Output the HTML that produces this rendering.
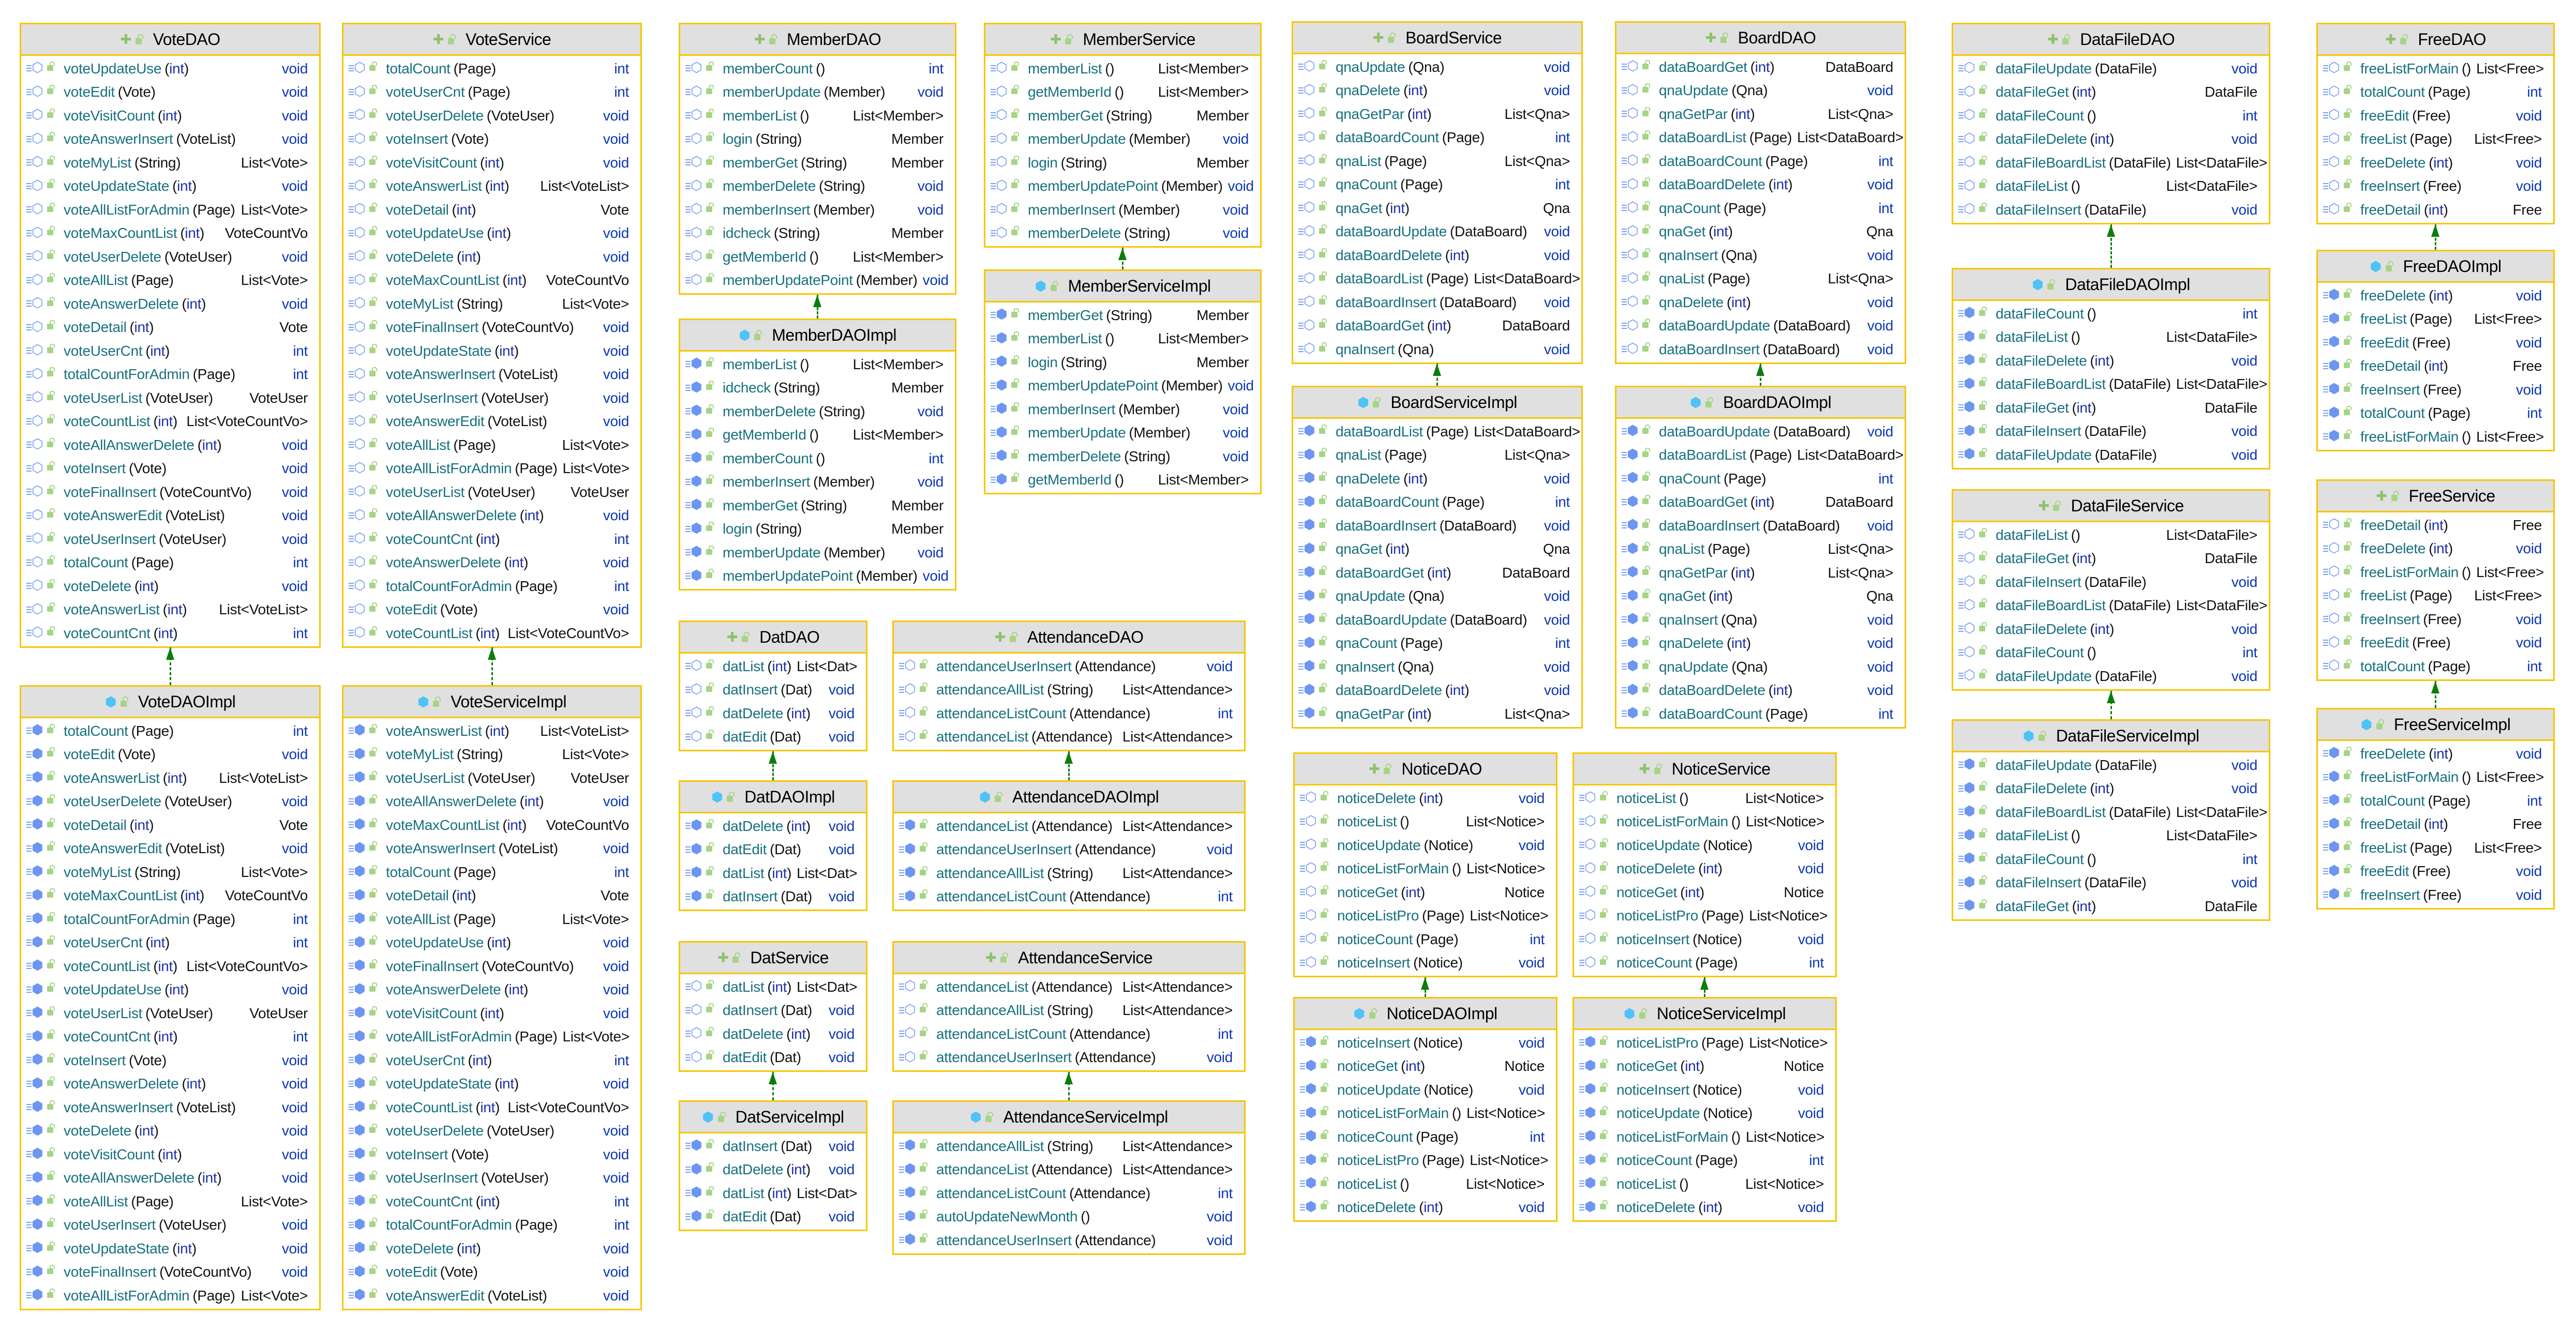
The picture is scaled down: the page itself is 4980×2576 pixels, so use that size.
<!DOCTYPE html>
<html><head><meta charset="utf-8"><style>
html,body{margin:0;padding:0;background:#fff}
body{width:4980px;height:2576px;position:relative;overflow:hidden;font-family:"Liberation Sans","DejaVu Sans",sans-serif}
.b{position:absolute;border:3px solid #f7c600;background:#fff;box-sizing:border-box;padding-bottom:2px}
.h{height:58px;background:#e0e0e0;border-bottom:3px solid #f7c600;display:flex;align-items:center;justify-content:center;font-size:32px;letter-spacing:-0.5px;color:#000;margin-bottom:2px}
.h i{font-style:normal;font-size:26px;margin-right:8px;line-height:1}
.f .h i::before{content:"✚";color:#8cc26b}
.m .h i::before{content:"⬢";color:#4fc3f7;font-family:"DejaVu Sans"}
.h em{display:inline-block;width:12px;height:12px;background:#a6d585;border-radius:2px;margin:8px 22px 0 0;position:relative}
.h em::after{content:"";position:absolute;left:4px;top:-8px;width:7px;height:7px;border:2px solid #a6d585;border-bottom:0;border-radius:5px 5px 0 0}
p{margin:0;height:45.5px;display:flex;align-items:center;padding:0 22px 0 82px;font-size:28px;letter-spacing:-0.3px;white-space:nowrap;position:relative;color:#111}
p::before{content:"";position:absolute;left:10px;top:16px;width:10px;height:13px;background:repeating-linear-gradient(#7a9ff5 0 2px,transparent 2px 5px)}
p::after{content:"⬡";position:absolute;left:20px;top:6px;font-size:26px;color:#6d95f2;font-family:"DejaVu Sans";letter-spacing:0}
.m p::after{content:"⬢"}
p b{font-weight:normal;color:#17707e;position:relative;margin-right:6px}
p b::before{content:"";position:absolute;left:-32px;top:9px;width:12px;height:11px;background:#a6d585;border-radius:2px}
p b::after{content:"";position:absolute;left:-27px;top:2px;width:6px;height:6px;border:2px solid #a6d585;border-bottom:0;border-radius:4px 4px 0 0}
p u{text-decoration:none;color:#1c2fa6}
p s{text-decoration:none;margin-left:auto;padding-left:10px;color:#0b36b5}
p s.c{color:#111}
.a{position:absolute;width:0;border-left:3px dashed #0b7d0b}
.a::before{content:"";position:absolute;left:-10px;top:0;border-left:8.5px solid transparent;border-right:8.5px solid transparent;border-bottom:24px solid #0b7d0b}
</style></head><body>

<div class="b f" style="left:38px;top:44px;width:582px">
<div class=h><i></i><em></em>VoteDAO</div>
<p><b>voteUpdateUse</b>(<u>int</u>)<s>void</s></p>
<p><b>voteEdit</b>(Vote)<s>void</s></p>
<p><b>voteVisitCount</b>(<u>int</u>)<s>void</s></p>
<p><b>voteAnswerInsert</b>(VoteList)<s>void</s></p>
<p><b>voteMyList</b>(String)<s class=c>List&lt;Vote&gt;</s></p>
<p><b>voteUpdateState</b>(<u>int</u>)<s>void</s></p>
<p><b>voteAllListForAdmin</b>(Page)<s class=c>List&lt;Vote&gt;</s></p>
<p><b>voteMaxCountList</b>(<u>int</u>)<s class=c>VoteCountVo</s></p>
<p><b>voteUserDelete</b>(VoteUser)<s>void</s></p>
<p><b>voteAllList</b>(Page)<s class=c>List&lt;Vote&gt;</s></p>
<p><b>voteAnswerDelete</b>(<u>int</u>)<s>void</s></p>
<p><b>voteDetail</b>(<u>int</u>)<s class=c>Vote</s></p>
<p><b>voteUserCnt</b>(<u>int</u>)<s>int</s></p>
<p><b>totalCountForAdmin</b>(Page)<s>int</s></p>
<p><b>voteUserList</b>(VoteUser)<s class=c>VoteUser</s></p>
<p><b>voteCountList</b>(<u>int</u>)<s class=c>List&lt;VoteCountVo&gt;</s></p>
<p><b>voteAllAnswerDelete</b>(<u>int</u>)<s>void</s></p>
<p><b>voteInsert</b>(Vote)<s>void</s></p>
<p><b>voteFinalInsert</b>(VoteCountVo)<s>void</s></p>
<p><b>voteAnswerEdit</b>(VoteList)<s>void</s></p>
<p><b>voteUserInsert</b>(VoteUser)<s>void</s></p>
<p><b>totalCount</b>(Page)<s>int</s></p>
<p><b>voteDelete</b>(<u>int</u>)<s>void</s></p>
<p><b>voteAnswerList</b>(<u>int</u>)<s class=c>List&lt;VoteList&gt;</s></p>
<p><b>voteCountCnt</b>(<u>int</u>)<s>int</s></p>
</div>

<div class="b m" style="left:38px;top:1325px;width:582px">
<div class=h><i></i><em></em>VoteDAOImpl</div>
<p><b>totalCount</b>(Page)<s>int</s></p>
<p><b>voteEdit</b>(Vote)<s>void</s></p>
<p><b>voteAnswerList</b>(<u>int</u>)<s class=c>List&lt;VoteList&gt;</s></p>
<p><b>voteUserDelete</b>(VoteUser)<s>void</s></p>
<p><b>voteDetail</b>(<u>int</u>)<s class=c>Vote</s></p>
<p><b>voteAnswerEdit</b>(VoteList)<s>void</s></p>
<p><b>voteMyList</b>(String)<s class=c>List&lt;Vote&gt;</s></p>
<p><b>voteMaxCountList</b>(<u>int</u>)<s class=c>VoteCountVo</s></p>
<p><b>totalCountForAdmin</b>(Page)<s>int</s></p>
<p><b>voteUserCnt</b>(<u>int</u>)<s>int</s></p>
<p><b>voteCountList</b>(<u>int</u>)<s class=c>List&lt;VoteCountVo&gt;</s></p>
<p><b>voteUpdateUse</b>(<u>int</u>)<s>void</s></p>
<p><b>voteUserList</b>(VoteUser)<s class=c>VoteUser</s></p>
<p><b>voteCountCnt</b>(<u>int</u>)<s>int</s></p>
<p><b>voteInsert</b>(Vote)<s>void</s></p>
<p><b>voteAnswerDelete</b>(<u>int</u>)<s>void</s></p>
<p><b>voteAnswerInsert</b>(VoteList)<s>void</s></p>
<p><b>voteDelete</b>(<u>int</u>)<s>void</s></p>
<p><b>voteVisitCount</b>(<u>int</u>)<s>void</s></p>
<p><b>voteAllAnswerDelete</b>(<u>int</u>)<s>void</s></p>
<p><b>voteAllList</b>(Page)<s class=c>List&lt;Vote&gt;</s></p>
<p><b>voteUserInsert</b>(VoteUser)<s>void</s></p>
<p><b>voteUpdateState</b>(<u>int</u>)<s>void</s></p>
<p><b>voteFinalInsert</b>(VoteCountVo)<s>void</s></p>
<p><b>voteAllListForAdmin</b>(Page)<s class=c>List&lt;Vote&gt;</s></p>
</div>

<div class="b f" style="left:661px;top:44px;width:580px">
<div class=h><i></i><em></em>VoteService</div>
<p><b>totalCount</b>(Page)<s>int</s></p>
<p><b>voteUserCnt</b>(Page)<s>int</s></p>
<p><b>voteUserDelete</b>(VoteUser)<s>void</s></p>
<p><b>voteInsert</b>(Vote)<s>void</s></p>
<p><b>voteVisitCount</b>(<u>int</u>)<s>void</s></p>
<p><b>voteAnswerList</b>(<u>int</u>)<s class=c>List&lt;VoteList&gt;</s></p>
<p><b>voteDetail</b>(<u>int</u>)<s class=c>Vote</s></p>
<p><b>voteUpdateUse</b>(<u>int</u>)<s>void</s></p>
<p><b>voteDelete</b>(<u>int</u>)<s>void</s></p>
<p><b>voteMaxCountList</b>(<u>int</u>)<s class=c>VoteCountVo</s></p>
<p><b>voteMyList</b>(String)<s class=c>List&lt;Vote&gt;</s></p>
<p><b>voteFinalInsert</b>(VoteCountVo)<s>void</s></p>
<p><b>voteUpdateState</b>(<u>int</u>)<s>void</s></p>
<p><b>voteAnswerInsert</b>(VoteList)<s>void</s></p>
<p><b>voteUserInsert</b>(VoteUser)<s>void</s></p>
<p><b>voteAnswerEdit</b>(VoteList)<s>void</s></p>
<p><b>voteAllList</b>(Page)<s class=c>List&lt;Vote&gt;</s></p>
<p><b>voteAllListForAdmin</b>(Page)<s class=c>List&lt;Vote&gt;</s></p>
<p><b>voteUserList</b>(VoteUser)<s class=c>VoteUser</s></p>
<p><b>voteAllAnswerDelete</b>(<u>int</u>)<s>void</s></p>
<p><b>voteCountCnt</b>(<u>int</u>)<s>int</s></p>
<p><b>voteAnswerDelete</b>(<u>int</u>)<s>void</s></p>
<p><b>totalCountForAdmin</b>(Page)<s>int</s></p>
<p><b>voteEdit</b>(Vote)<s>void</s></p>
<p><b>voteCountList</b>(<u>int</u>)<s class=c>List&lt;VoteCountVo&gt;</s></p>
</div>

<div class="b m" style="left:661px;top:1325px;width:580px">
<div class=h><i></i><em></em>VoteServiceImpl</div>
<p><b>voteAnswerList</b>(<u>int</u>)<s class=c>List&lt;VoteList&gt;</s></p>
<p><b>voteMyList</b>(String)<s class=c>List&lt;Vote&gt;</s></p>
<p><b>voteUserList</b>(VoteUser)<s class=c>VoteUser</s></p>
<p><b>voteAllAnswerDelete</b>(<u>int</u>)<s>void</s></p>
<p><b>voteMaxCountList</b>(<u>int</u>)<s class=c>VoteCountVo</s></p>
<p><b>voteAnswerInsert</b>(VoteList)<s>void</s></p>
<p><b>totalCount</b>(Page)<s>int</s></p>
<p><b>voteDetail</b>(<u>int</u>)<s class=c>Vote</s></p>
<p><b>voteAllList</b>(Page)<s class=c>List&lt;Vote&gt;</s></p>
<p><b>voteUpdateUse</b>(<u>int</u>)<s>void</s></p>
<p><b>voteFinalInsert</b>(VoteCountVo)<s>void</s></p>
<p><b>voteAnswerDelete</b>(<u>int</u>)<s>void</s></p>
<p><b>voteVisitCount</b>(<u>int</u>)<s>void</s></p>
<p><b>voteAllListForAdmin</b>(Page)<s class=c>List&lt;Vote&gt;</s></p>
<p><b>voteUserCnt</b>(<u>int</u>)<s>int</s></p>
<p><b>voteUpdateState</b>(<u>int</u>)<s>void</s></p>
<p><b>voteCountList</b>(<u>int</u>)<s class=c>List&lt;VoteCountVo&gt;</s></p>
<p><b>voteUserDelete</b>(VoteUser)<s>void</s></p>
<p><b>voteInsert</b>(Vote)<s>void</s></p>
<p><b>voteUserInsert</b>(VoteUser)<s>void</s></p>
<p><b>voteCountCnt</b>(<u>int</u>)<s>int</s></p>
<p><b>totalCountForAdmin</b>(Page)<s>int</s></p>
<p><b>voteDelete</b>(<u>int</u>)<s>void</s></p>
<p><b>voteEdit</b>(Vote)<s>void</s></p>
<p><b>voteAnswerEdit</b>(VoteList)<s>void</s></p>
</div>

<div class="b f" style="left:1312px;top:44px;width:537px">
<div class=h><i></i><em></em>MemberDAO</div>
<p><b>memberCount</b>()<s>int</s></p>
<p><b>memberUpdate</b>(Member)<s>void</s></p>
<p><b>memberList</b>()<s class=c>List&lt;Member&gt;</s></p>
<p><b>login</b>(String)<s class=c>Member</s></p>
<p><b>memberGet</b>(String)<s class=c>Member</s></p>
<p><b>memberDelete</b>(String)<s>void</s></p>
<p><b>memberInsert</b>(Member)<s>void</s></p>
<p><b>idcheck</b>(String)<s class=c>Member</s></p>
<p><b>getMemberId</b>()<s class=c>List&lt;Member&gt;</s></p>
<p><b>memberUpdatePoint</b>(Member)<s>void</s></p>
</div>

<div class="b m" style="left:1312px;top:616px;width:537px">
<div class=h><i></i><em></em>MemberDAOImpl</div>
<p><b>memberList</b>()<s class=c>List&lt;Member&gt;</s></p>
<p><b>idcheck</b>(String)<s class=c>Member</s></p>
<p><b>memberDelete</b>(String)<s>void</s></p>
<p><b>getMemberId</b>()<s class=c>List&lt;Member&gt;</s></p>
<p><b>memberCount</b>()<s>int</s></p>
<p><b>memberInsert</b>(Member)<s>void</s></p>
<p><b>memberGet</b>(String)<s class=c>Member</s></p>
<p><b>login</b>(String)<s class=c>Member</s></p>
<p><b>memberUpdate</b>(Member)<s>void</s></p>
<p><b>memberUpdatePoint</b>(Member)<s>void</s></p>
</div>

<div class="b f" style="left:1902px;top:44px;width:537px">
<div class=h><i></i><em></em>MemberService</div>
<p><b>memberList</b>()<s class=c>List&lt;Member&gt;</s></p>
<p><b>getMemberId</b>()<s class=c>List&lt;Member&gt;</s></p>
<p><b>memberGet</b>(String)<s class=c>Member</s></p>
<p><b>memberUpdate</b>(Member)<s>void</s></p>
<p><b>login</b>(String)<s class=c>Member</s></p>
<p><b>memberUpdatePoint</b>(Member)<s>void</s></p>
<p><b>memberInsert</b>(Member)<s>void</s></p>
<p><b>memberDelete</b>(String)<s>void</s></p>
</div>

<div class="b m" style="left:1902px;top:521px;width:537px">
<div class=h><i></i><em></em>MemberServiceImpl</div>
<p><b>memberGet</b>(String)<s class=c>Member</s></p>
<p><b>memberList</b>()<s class=c>List&lt;Member&gt;</s></p>
<p><b>login</b>(String)<s class=c>Member</s></p>
<p><b>memberUpdatePoint</b>(Member)<s>void</s></p>
<p><b>memberInsert</b>(Member)<s>void</s></p>
<p><b>memberUpdate</b>(Member)<s>void</s></p>
<p><b>memberDelete</b>(String)<s>void</s></p>
<p><b>getMemberId</b>()<s class=c>List&lt;Member&gt;</s></p>
</div>

<div class="b f" style="left:1312px;top:1200px;width:365px">
<div class=h><i></i><em></em>DatDAO</div>
<p><b>datList</b>(<u>int</u>)<s class=c>List&lt;Dat&gt;</s></p>
<p><b>datInsert</b>(Dat)<s>void</s></p>
<p><b>datDelete</b>(<u>int</u>)<s>void</s></p>
<p><b>datEdit</b>(Dat)<s>void</s></p>
</div>
<div class="b m" style="left:1312px;top:1509px;width:365px">
<div class=h><i></i><em></em>DatDAOImpl</div>
<p><b>datDelete</b>(<u>int</u>)<s>void</s></p>
<p><b>datEdit</b>(Dat)<s>void</s></p>
<p><b>datList</b>(<u>int</u>)<s class=c>List&lt;Dat&gt;</s></p>
<p><b>datInsert</b>(Dat)<s>void</s></p>
</div>
<div class="b f" style="left:1312px;top:1820px;width:365px">
<div class=h><i></i><em></em>DatService</div>
<p><b>datList</b>(<u>int</u>)<s class=c>List&lt;Dat&gt;</s></p>
<p><b>datInsert</b>(Dat)<s>void</s></p>
<p><b>datDelete</b>(<u>int</u>)<s>void</s></p>
<p><b>datEdit</b>(Dat)<s>void</s></p>
</div>
<div class="b m" style="left:1312px;top:2128px;width:365px">
<div class=h><i></i><em></em>DatServiceImpl</div>
<p><b>datInsert</b>(Dat)<s>void</s></p>
<p><b>datDelete</b>(<u>int</u>)<s>void</s></p>
<p><b>datList</b>(<u>int</u>)<s class=c>List&lt;Dat&gt;</s></p>
<p><b>datEdit</b>(Dat)<s>void</s></p>
</div>

<div class="b f" style="left:1725px;top:1200px;width:683px">
<div class=h><i></i><em></em>AttendanceDAO</div>
<p><b>attendanceUserInsert</b>(Attendance)<s>void</s></p>
<p><b>attendanceAllList</b>(String)<s class=c>List&lt;Attendance&gt;</s></p>
<p><b>attendanceListCount</b>(Attendance)<s>int</s></p>
<p><b>attendanceList</b>(Attendance)<s class=c>List&lt;Attendance&gt;</s></p>
</div>
<div class="b m" style="left:1725px;top:1509px;width:683px">
<div class=h><i></i><em></em>AttendanceDAOImpl</div>
<p><b>attendanceList</b>(Attendance)<s class=c>List&lt;Attendance&gt;</s></p>
<p><b>attendanceUserInsert</b>(Attendance)<s>void</s></p>
<p><b>attendanceAllList</b>(String)<s class=c>List&lt;Attendance&gt;</s></p>
<p><b>attendanceListCount</b>(Attendance)<s>int</s></p>
</div>
<div class="b f" style="left:1725px;top:1820px;width:683px">
<div class=h><i></i><em></em>AttendanceService</div>
<p><b>attendanceList</b>(Attendance)<s class=c>List&lt;Attendance&gt;</s></p>
<p><b>attendanceAllList</b>(String)<s class=c>List&lt;Attendance&gt;</s></p>
<p><b>attendanceListCount</b>(Attendance)<s>int</s></p>
<p><b>attendanceUserInsert</b>(Attendance)<s>void</s></p>
</div>
<div class="b m" style="left:1725px;top:2128px;width:683px">
<div class=h><i></i><em></em>AttendanceServiceImpl</div>
<p><b>attendanceAllList</b>(String)<s class=c>List&lt;Attendance&gt;</s></p>
<p><b>attendanceList</b>(Attendance)<s class=c>List&lt;Attendance&gt;</s></p>
<p><b>attendanceListCount</b>(Attendance)<s>int</s></p>
<p><b>autoUpdateNewMonth</b>()<s>void</s></p>
<p><b>attendanceUserInsert</b>(Attendance)<s>void</s></p>
</div>

<div class="b f" style="left:2497px;top:41px;width:563px">
<div class=h><i></i><em></em>BoardService</div>
<p><b>qnaUpdate</b>(Qna)<s>void</s></p>
<p><b>qnaDelete</b>(<u>int</u>)<s>void</s></p>
<p><b>qnaGetPar</b>(<u>int</u>)<s class=c>List&lt;Qna&gt;</s></p>
<p><b>dataBoardCount</b>(Page)<s>int</s></p>
<p><b>qnaList</b>(Page)<s class=c>List&lt;Qna&gt;</s></p>
<p><b>qnaCount</b>(Page)<s>int</s></p>
<p><b>qnaGet</b>(<u>int</u>)<s class=c>Qna</s></p>
<p><b>dataBoardUpdate</b>(DataBoard)<s>void</s></p>
<p><b>dataBoardDelete</b>(<u>int</u>)<s>void</s></p>
<p><b>dataBoardList</b>(Page)<s class=c>List&lt;DataBoard&gt;</s></p>
<p><b>dataBoardInsert</b>(DataBoard)<s>void</s></p>
<p><b>dataBoardGet</b>(<u>int</u>)<s class=c>DataBoard</s></p>
<p><b>qnaInsert</b>(Qna)<s>void</s></p>
</div>
<div class="b m" style="left:2497px;top:746px;width:563px">
<div class=h><i></i><em></em>BoardServiceImpl</div>
<p><b>dataBoardList</b>(Page)<s class=c>List&lt;DataBoard&gt;</s></p>
<p><b>qnaList</b>(Page)<s class=c>List&lt;Qna&gt;</s></p>
<p><b>qnaDelete</b>(<u>int</u>)<s>void</s></p>
<p><b>dataBoardCount</b>(Page)<s>int</s></p>
<p><b>dataBoardInsert</b>(DataBoard)<s>void</s></p>
<p><b>qnaGet</b>(<u>int</u>)<s class=c>Qna</s></p>
<p><b>dataBoardGet</b>(<u>int</u>)<s class=c>DataBoard</s></p>
<p><b>qnaUpdate</b>(Qna)<s>void</s></p>
<p><b>dataBoardUpdate</b>(DataBoard)<s>void</s></p>
<p><b>qnaCount</b>(Page)<s>int</s></p>
<p><b>qnaInsert</b>(Qna)<s>void</s></p>
<p><b>dataBoardDelete</b>(<u>int</u>)<s>void</s></p>
<p><b>qnaGetPar</b>(<u>int</u>)<s class=c>List&lt;Qna&gt;</s></p>
</div>

<div class="b f" style="left:3122px;top:41px;width:563px">
<div class=h><i></i><em></em>BoardDAO</div>
<p><b>dataBoardGet</b>(<u>int</u>)<s class=c>DataBoard</s></p>
<p><b>qnaUpdate</b>(Qna)<s>void</s></p>
<p><b>qnaGetPar</b>(<u>int</u>)<s class=c>List&lt;Qna&gt;</s></p>
<p><b>dataBoardList</b>(Page)<s class=c>List&lt;DataBoard&gt;</s></p>
<p><b>dataBoardCount</b>(Page)<s>int</s></p>
<p><b>dataBoardDelete</b>(<u>int</u>)<s>void</s></p>
<p><b>qnaCount</b>(Page)<s>int</s></p>
<p><b>qnaGet</b>(<u>int</u>)<s class=c>Qna</s></p>
<p><b>qnaInsert</b>(Qna)<s>void</s></p>
<p><b>qnaList</b>(Page)<s class=c>List&lt;Qna&gt;</s></p>
<p><b>qnaDelete</b>(<u>int</u>)<s>void</s></p>
<p><b>dataBoardUpdate</b>(DataBoard)<s>void</s></p>
<p><b>dataBoardInsert</b>(DataBoard)<s>void</s></p>
</div>
<div class="b m" style="left:3122px;top:746px;width:563px">
<div class=h><i></i><em></em>BoardDAOImpl</div>
<p><b>dataBoardUpdate</b>(DataBoard)<s>void</s></p>
<p><b>dataBoardList</b>(Page)<s class=c>List&lt;DataBoard&gt;</s></p>
<p><b>qnaCount</b>(Page)<s>int</s></p>
<p><b>dataBoardGet</b>(<u>int</u>)<s class=c>DataBoard</s></p>
<p><b>dataBoardInsert</b>(DataBoard)<s>void</s></p>
<p><b>qnaList</b>(Page)<s class=c>List&lt;Qna&gt;</s></p>
<p><b>qnaGetPar</b>(<u>int</u>)<s class=c>List&lt;Qna&gt;</s></p>
<p><b>qnaGet</b>(<u>int</u>)<s class=c>Qna</s></p>
<p><b>qnaInsert</b>(Qna)<s>void</s></p>
<p><b>qnaDelete</b>(<u>int</u>)<s>void</s></p>
<p><b>qnaUpdate</b>(Qna)<s>void</s></p>
<p><b>dataBoardDelete</b>(<u>int</u>)<s>void</s></p>
<p><b>dataBoardCount</b>(Page)<s>int</s></p>
</div>

<div class="b f" style="left:2500px;top:1455px;width:511px">
<div class=h><i></i><em></em>NoticeDAO</div>
<p><b>noticeDelete</b>(<u>int</u>)<s>void</s></p>
<p><b>noticeList</b>()<s class=c>List&lt;Notice&gt;</s></p>
<p><b>noticeUpdate</b>(Notice)<s>void</s></p>
<p><b>noticeListForMain</b>()<s class=c>List&lt;Notice&gt;</s></p>
<p><b>noticeGet</b>(<u>int</u>)<s class=c>Notice</s></p>
<p><b>noticeListPro</b>(Page)<s class=c>List&lt;Notice&gt;</s></p>
<p><b>noticeCount</b>(Page)<s>int</s></p>
<p><b>noticeInsert</b>(Notice)<s>void</s></p>
</div>
<div class="b m" style="left:2500px;top:1928px;width:511px">
<div class=h><i></i><em></em>NoticeDAOImpl</div>
<p><b>noticeInsert</b>(Notice)<s>void</s></p>
<p><b>noticeGet</b>(<u>int</u>)<s class=c>Notice</s></p>
<p><b>noticeUpdate</b>(Notice)<s>void</s></p>
<p><b>noticeListForMain</b>()<s class=c>List&lt;Notice&gt;</s></p>
<p><b>noticeCount</b>(Page)<s>int</s></p>
<p><b>noticeListPro</b>(Page)<s class=c>List&lt;Notice&gt;</s></p>
<p><b>noticeList</b>()<s class=c>List&lt;Notice&gt;</s></p>
<p><b>noticeDelete</b>(<u>int</u>)<s>void</s></p>
</div>
<div class="b f" style="left:3040px;top:1455px;width:511px">
<div class=h><i></i><em></em>NoticeService</div>
<p><b>noticeList</b>()<s class=c>List&lt;Notice&gt;</s></p>
<p><b>noticeListForMain</b>()<s class=c>List&lt;Notice&gt;</s></p>
<p><b>noticeUpdate</b>(Notice)<s>void</s></p>
<p><b>noticeDelete</b>(<u>int</u>)<s>void</s></p>
<p><b>noticeGet</b>(<u>int</u>)<s class=c>Notice</s></p>
<p><b>noticeListPro</b>(Page)<s class=c>List&lt;Notice&gt;</s></p>
<p><b>noticeInsert</b>(Notice)<s>void</s></p>
<p><b>noticeCount</b>(Page)<s>int</s></p>
</div>
<div class="b m" style="left:3040px;top:1928px;width:511px">
<div class=h><i></i><em></em>NoticeServiceImpl</div>
<p><b>noticeListPro</b>(Page)<s class=c>List&lt;Notice&gt;</s></p>
<p><b>noticeGet</b>(<u>int</u>)<s class=c>Notice</s></p>
<p><b>noticeInsert</b>(Notice)<s>void</s></p>
<p><b>noticeUpdate</b>(Notice)<s>void</s></p>
<p><b>noticeListForMain</b>()<s class=c>List&lt;Notice&gt;</s></p>
<p><b>noticeCount</b>(Page)<s>int</s></p>
<p><b>noticeList</b>()<s class=c>List&lt;Notice&gt;</s></p>
<p><b>noticeDelete</b>(<u>int</u>)<s>void</s></p>
</div>

<div class="b f" style="left:3773px;top:44px;width:616px">
<div class=h><i></i><em></em>DataFileDAO</div>
<p><b>dataFileUpdate</b>(DataFile)<s>void</s></p>
<p><b>dataFileGet</b>(<u>int</u>)<s class=c>DataFile</s></p>
<p><b>dataFileCount</b>()<s>int</s></p>
<p><b>dataFileDelete</b>(<u>int</u>)<s>void</s></p>
<p><b>dataFileBoardList</b>(DataFile)<s class=c>List&lt;DataFile&gt;</s></p>
<p><b>dataFileList</b>()<s class=c>List&lt;DataFile&gt;</s></p>
<p><b>dataFileInsert</b>(DataFile)<s>void</s></p>
</div>
<div class="b m" style="left:3773px;top:518px;width:616px">
<div class=h><i></i><em></em>DataFileDAOImpl</div>
<p><b>dataFileCount</b>()<s>int</s></p>
<p><b>dataFileList</b>()<s class=c>List&lt;DataFile&gt;</s></p>
<p><b>dataFileDelete</b>(<u>int</u>)<s>void</s></p>
<p><b>dataFileBoardList</b>(DataFile)<s class=c>List&lt;DataFile&gt;</s></p>
<p><b>dataFileGet</b>(<u>int</u>)<s class=c>DataFile</s></p>
<p><b>dataFileInsert</b>(DataFile)<s>void</s></p>
<p><b>dataFileUpdate</b>(DataFile)<s>void</s></p>
</div>
<div class="b f" style="left:3773px;top:946px;width:616px">
<div class=h><i></i><em></em>DataFileService</div>
<p><b>dataFileList</b>()<s class=c>List&lt;DataFile&gt;</s></p>
<p><b>dataFileGet</b>(<u>int</u>)<s class=c>DataFile</s></p>
<p><b>dataFileInsert</b>(DataFile)<s>void</s></p>
<p><b>dataFileBoardList</b>(DataFile)<s class=c>List&lt;DataFile&gt;</s></p>
<p><b>dataFileDelete</b>(<u>int</u>)<s>void</s></p>
<p><b>dataFileCount</b>()<s>int</s></p>
<p><b>dataFileUpdate</b>(DataFile)<s>void</s></p>
</div>
<div class="b m" style="left:3773px;top:1391px;width:616px">
<div class=h><i></i><em></em>DataFileServiceImpl</div>
<p><b>dataFileUpdate</b>(DataFile)<s>void</s></p>
<p><b>dataFileDelete</b>(<u>int</u>)<s>void</s></p>
<p><b>dataFileBoardList</b>(DataFile)<s class=c>List&lt;DataFile&gt;</s></p>
<p><b>dataFileList</b>()<s class=c>List&lt;DataFile&gt;</s></p>
<p><b>dataFileCount</b>()<s>int</s></p>
<p><b>dataFileInsert</b>(DataFile)<s>void</s></p>
<p><b>dataFileGet</b>(<u>int</u>)<s class=c>DataFile</s></p>
</div>

<div class="b f" style="left:4478px;top:44px;width:461px">
<div class=h><i></i><em></em>FreeDAO</div>
<p><b>freeListForMain</b>()<s class=c>List&lt;Free&gt;</s></p>
<p><b>totalCount</b>(Page)<s>int</s></p>
<p><b>freeEdit</b>(Free)<s>void</s></p>
<p><b>freeList</b>(Page)<s class=c>List&lt;Free&gt;</s></p>
<p><b>freeDelete</b>(<u>int</u>)<s>void</s></p>
<p><b>freeInsert</b>(Free)<s>void</s></p>
<p><b>freeDetail</b>(<u>int</u>)<s class=c>Free</s></p>
</div>
<div class="b m" style="left:4478px;top:483px;width:461px">
<div class=h><i></i><em></em>FreeDAOImpl</div>
<p><b>freeDelete</b>(<u>int</u>)<s>void</s></p>
<p><b>freeList</b>(Page)<s class=c>List&lt;Free&gt;</s></p>
<p><b>freeEdit</b>(Free)<s>void</s></p>
<p><b>freeDetail</b>(<u>int</u>)<s class=c>Free</s></p>
<p><b>freeInsert</b>(Free)<s>void</s></p>
<p><b>totalCount</b>(Page)<s>int</s></p>
<p><b>freeListForMain</b>()<s class=c>List&lt;Free&gt;</s></p>
</div>
<div class="b f" style="left:4478px;top:927px;width:461px">
<div class=h><i></i><em></em>FreeService</div>
<p><b>freeDetail</b>(<u>int</u>)<s class=c>Free</s></p>
<p><b>freeDelete</b>(<u>int</u>)<s>void</s></p>
<p><b>freeListForMain</b>()<s class=c>List&lt;Free&gt;</s></p>
<p><b>freeList</b>(Page)<s class=c>List&lt;Free&gt;</s></p>
<p><b>freeInsert</b>(Free)<s>void</s></p>
<p><b>freeEdit</b>(Free)<s>void</s></p>
<p><b>totalCount</b>(Page)<s>int</s></p>
</div>
<div class="b m" style="left:4478px;top:1369px;width:461px">
<div class=h><i></i><em></em>FreeServiceImpl</div>
<p><b>freeDelete</b>(<u>int</u>)<s>void</s></p>
<p><b>freeListForMain</b>()<s class=c>List&lt;Free&gt;</s></p>
<p><b>totalCount</b>(Page)<s>int</s></p>
<p><b>freeDetail</b>(<u>int</u>)<s class=c>Free</s></p>
<p><b>freeList</b>(Page)<s class=c>List&lt;Free&gt;</s></p>
<p><b>freeEdit</b>(Free)<s>void</s></p>
<p><b>freeInsert</b>(Free)<s>void</s></p>
</div>

<div class=a style="left:328px;top:1252px;height:73px"></div>
<div class=a style="left:950px;top:1252px;height:73px"></div>
<div class=a style="left:1579px;top:570px;height:46px"></div>
<div class=a style="left:2169px;top:479px;height:42px"></div>
<div class=a style="left:1493px;top:1453px;height:56px"></div>
<div class=a style="left:1493px;top:2073px;height:55px"></div>
<div class=a style="left:2065px;top:1453px;height:56px"></div>
<div class=a style="left:2065px;top:2073px;height:55px"></div>
<div class=a style="left:2777px;top:703px;height:43px"></div>
<div class=a style="left:3402px;top:703px;height:43px"></div>
<div class=a style="left:2754px;top:1890px;height:38px"></div>
<div class=a style="left:3294px;top:1890px;height:38px"></div>
<div class=a style="left:4080px;top:434px;height:84px"></div>
<div class=a style="left:4080px;top:1336px;height:55px"></div>
<div class=a style="left:4707px;top:434px;height:49px"></div>
<div class=a style="left:4707px;top:1317px;height:52px"></div>
</body></html>
